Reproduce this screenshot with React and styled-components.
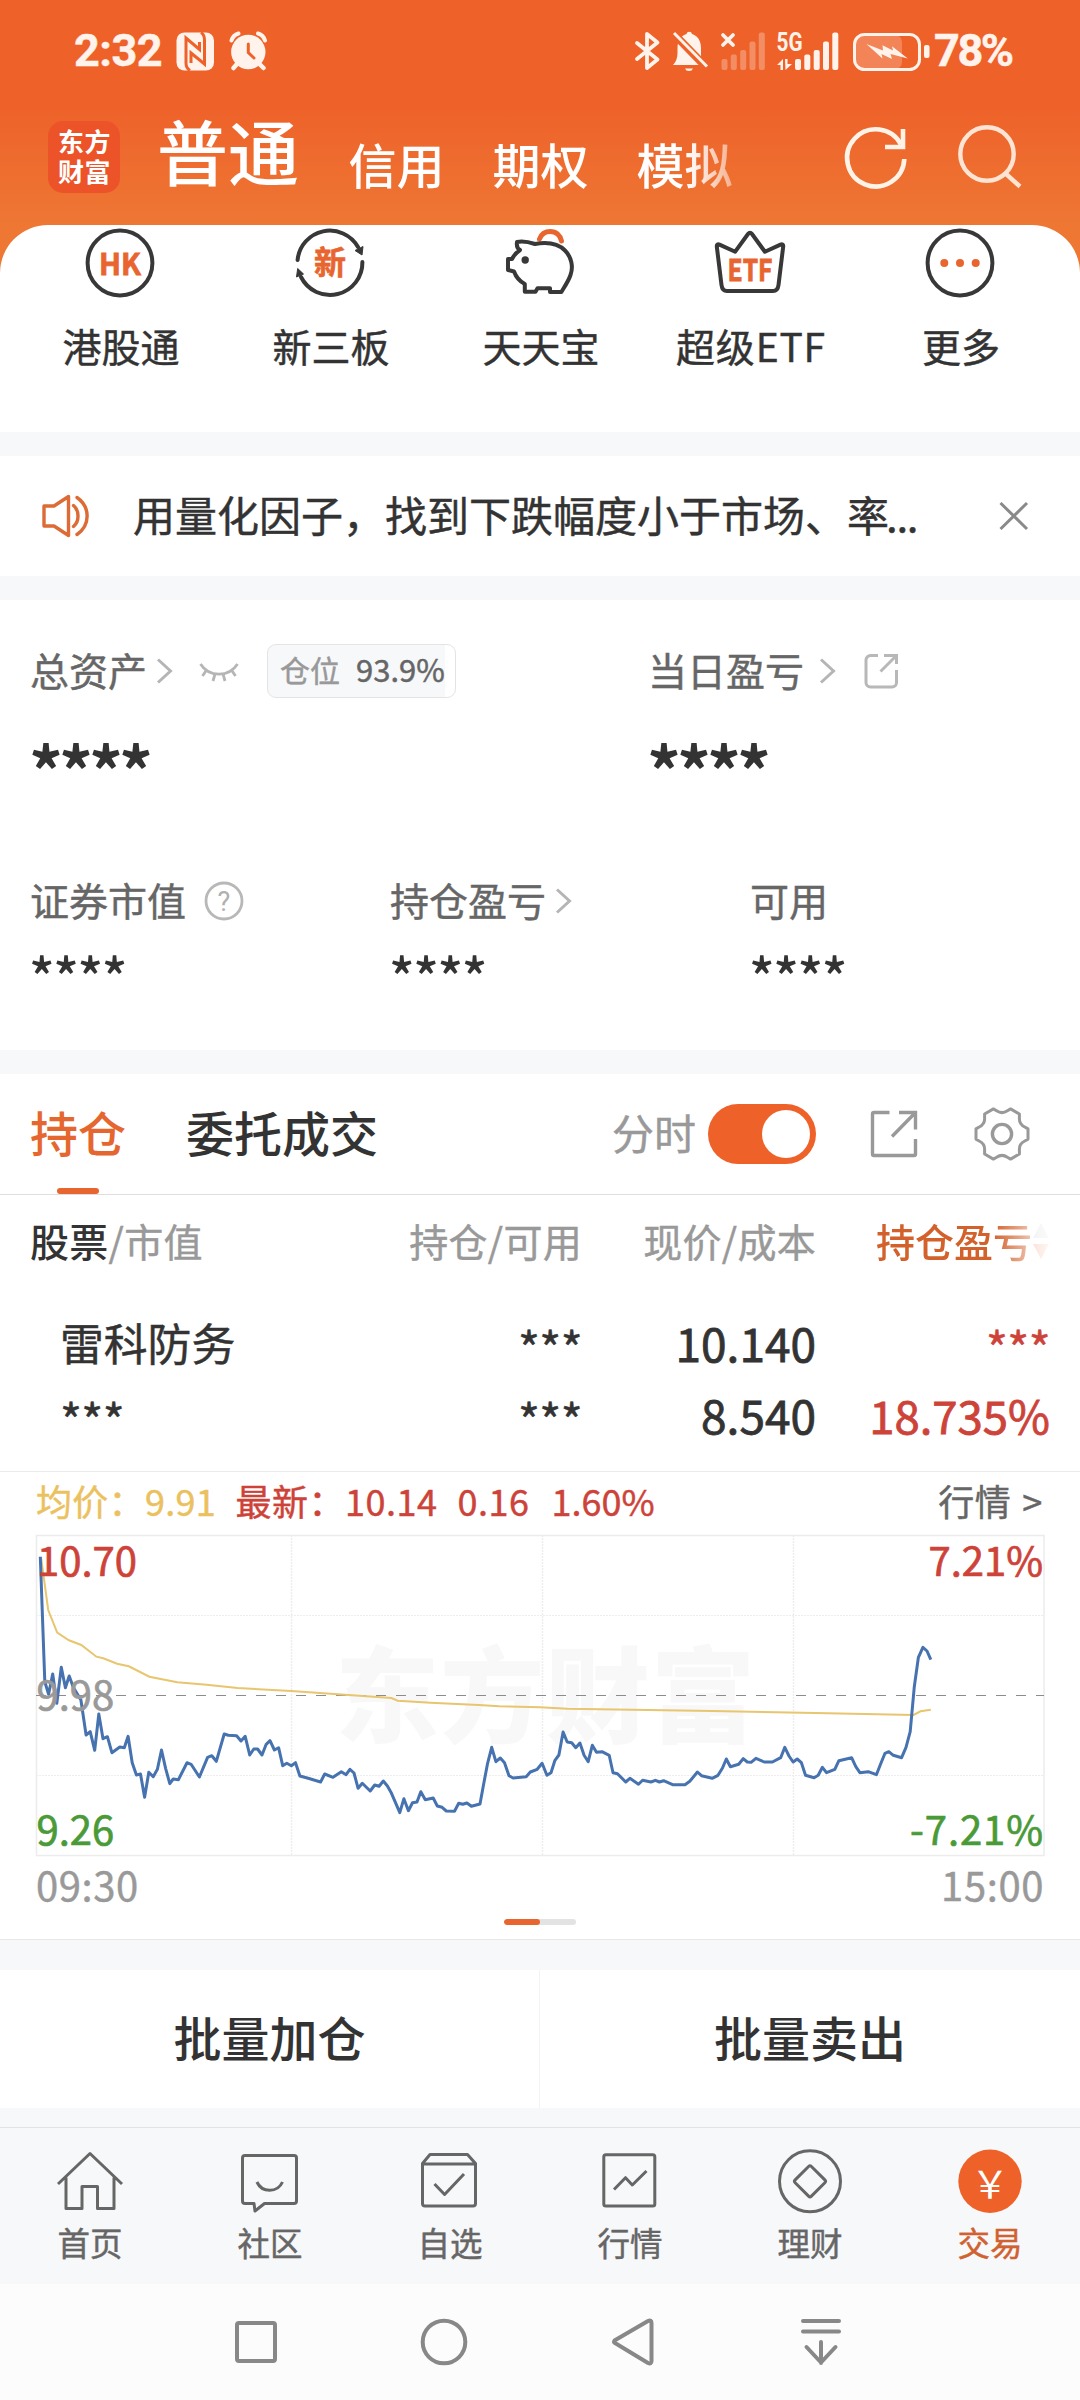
import styled, { createGlobalStyle } from "styled-components";

const GlobalStyle = createGlobalStyle`
    * {
        box-sizing: border-box;
    }

    body {
        margin: 0;
        background-color: #fff;
        font-family: "Noto Sans CJK SC", sans-serif;
        color: #333;
        -webkit-text-stroke: 0.45px;
    }

    svg {
        display: block;
        flex: none;
        overflow: visible;
    }
`;

const Page = styled.div`
    width: 1080px;
    height: 2400px;
    display: flex;
    flex-direction: column;
    overflow: hidden;
`;

const Hero = styled.header`
    height: 432px;
    flex: none;
    background: linear-gradient(to bottom, #ee622a 0, #ee622a 108px, #ee7734 225px);
`;

const StatusBar = styled.div`
    height: 102px;
    padding: 0 68.5px 0 74px;
    display: flex;
    align-items: center;
    justify-content: space-between;
    color: #fff3ec;
`;

const StatusGroup = styled.div`
    display: flex;
    align-items: center;
    gap: ${(props) => props.$gap}px;
`;

const StatusText = styled.span`
    margin-left: ${(props) => props.$pull || 0}px;
    font-family: Roboto, sans-serif;
    font-weight: 700;
    font-size: 45px;
    line-height: 50px;
    letter-spacing: ${(props) => props.$tracking}px;
`;

const TitleBar = styled.div`
    height: 123px;
    padding: 0 58px 0 48px;
    display: flex;
    align-items: flex-start;
`;

const Logo = styled.div`
    width: 72px;
    height: 72px;
    margin-top: 19px;
    padding: 5px 0 0 10px;
    border-radius: 15px;
    background-color: #ed5329;
    color: #fff;
    font-weight: 700;
    font-size: 26px;
    line-height: 30px;
    -webkit-text-stroke: 0;
`;

const LogoLine = styled.div`
    height: 30px;
    letter-spacing: 0.5px;
`;

const AccountTabs = styled.nav`
    width: 620px;
    height: 100px;
    margin-left: 37px;
    display: flex;
    align-items: baseline;
    gap: 48px;
    color: #fff;
    white-space: nowrap;
    mask-image: linear-gradient(to right, #000 530px, transparent 615px);
    -webkit-text-stroke: 0;
`;

const AccountTab = styled.span`
    font-size: ${(props) => (props.$active ? 71 : 48)}px;
    font-weight: 500;
    line-height: ${(props) => (props.$active ? 94 : 100)}px;
    padding-bottom: ${(props) => (props.$active ? 6 : 0)}px;
    margin-right: ${(props) => (props.$active ? 1.5 : 0)}px;
    transform: translateY(${(props) => (props.$active ? 0 : 4)}px);
`;

const TitleActions = styled.div`
    display: flex;
    margin: 20px 0 0 auto;
    gap: 40px;
`;

const Shortcuts = styled.div`
    height: 207px;
    padding: 3px 15px 0;
    display: grid;
    grid-template-columns: repeat(5, 210px);
    background-color: #fff;
    border-radius: 48px 48px 0 0;
`;

const Shortcut = styled.div`
    display: flex;
    flex-direction: column;
    align-items: center;
`;

const ShortcutLabel = styled.span`
    margin: 18px 0 0 2px;
    font-size: 39px;
    line-height: 58px;
    letter-spacing: ${(props) => props.$tracking || 0}px;
`;

const Band = styled.div`
    height: ${(props) => props.$height}px;
    flex: none;
    background-color: #f7f8fa;
`;

const Notice = styled.section`
    height: 120px;
    flex: none;
    padding: 0 51px 0 40px;
    display: flex;
    align-items: center;
`;

const NoticeText = styled.p`
    flex: 1;
    margin: -4px 0 0 41px;
    font-size: 42px;
    line-height: 60px;
    white-space: nowrap;
`;

const Ellipsis = styled.span`
    margin-left: -3px;
    letter-spacing: -1.3px;
`;

const Assets = styled.section`
    height: 450px;
    flex: none;
    padding: 41px 30px 0;
`;

const TotalRow = styled.div`
    height: 230px;
    display: grid;
    grid-template-columns: 618px 1fr;
`;

const DetailRow = styled.div`
    display: grid;
    grid-template-columns: repeat(3, 360px);
`;

const AssetHead = styled.div`
    height: 60px;
    display: flex;
    align-items: center;
    color: #666;
`;

const AssetName = styled.span`
    font-size: 39px;
    line-height: 56px;
    margin-top: -4px;
    margin-right: ${(props) => props.$gap || 0}px;
`;

const Masked = styled.div`
    font-size: ${(props) => (props.$large ? 67 : 53)}px;
    font-weight: ${(props) => (props.$large ? 700 : 500)};
    line-height: 60px;
    letter-spacing: ${(props) => (props.$large ? -4 : -1.4)}px;
    margin-top: ${(props) => (props.$large ? 37 : 14)}px;
    margin-left: -1px;
    -webkit-text-stroke: 0;
`;

const PositionTag = styled.div`
    width: 189px;
    height: 54px;
    margin-left: 27px;
    padding: 0 0 4px 12px;
    display: flex;
    align-items: center;
    gap: 16px;
    border: 1px solid #e3e4e6;
    border-radius: 9px;
    background: linear-gradient(to right, #f7f8fa 177px, #fff 177px);
    color: #999;
    font-size: 30px;
    line-height: 40px;
`;

const PositionValue = styled.span`
    color: #666;
    font-size: 31px;
`;

const HoldingTabs = styled.section`
    height: 121px;
    flex: none;
    padding: 0 49px 0 30px;
    display: flex;
    align-items: center;
    border-bottom: 1px solid #dedede;
`;

const HoldingTab = styled.div`
    height: 120px;
    margin-right: 60px;
    display: flex;
    flex-direction: column;
    align-items: center;
    font-size: 48px;
    font-weight: 500;
    line-height: 114px;
    color: ${(props) => (props.$active ? "#e5672f" : "#333")};
    -webkit-text-stroke: 0;

    &::after {
        content: "";
        width: 42px;
        height: 6px;
        border-radius: 3px;
        background-color: ${(props) => (props.$active ? "#e8652f" : "transparent")};
    }
`;

const SwitchLabel = styled.span`
    margin: -5px 12px 0 auto;
    font-size: 42px;
    line-height: 60px;
    color: #999;
`;

const Switch = styled.div`
    width: 108px;
    height: 60px;
    padding: 6px;
    display: flex;
    justify-content: flex-end;
    border-radius: 30px;
    background-color: #ee622a;
    margin-right: 53px;

    &::after {
        content: "";
        width: 48px;
        height: 48px;
        border-radius: 50%;
        background-color: #fff;
    }
`;

const GearSlot = styled.div`
    margin-left: 54px;
`;

const Columns = styled.div`
    padding: 0 30px;
    display: grid;
    grid-template-columns: 282px 270px 234px 234px;
`;

const HeadRow = styled(Columns)`
    height: 95px;
    font-size: 39px;
    line-height: 91px;
    letter-spacing: 0.3px;
    color: #999;
`;

const HeadCell = styled.span`
    text-align: ${(props) => (props.$first ? "left" : "right")};
    white-space: nowrap;
`;

const HeadStrong = styled.b`
    font-weight: 500;
    color: #333;
    -webkit-text-stroke: 0;
`;

const SortCell = styled.span`
    height: 91px;
    display: flex;
    align-items: center;
    justify-content: flex-end;
    color: #d3612c;
    font-weight: 500;
    letter-spacing: 0;
    -webkit-text-stroke: 0;
    mask-image: linear-gradient(to right, #000 177px, transparent 239px);
`;

const HoldingRow = styled(Columns)`
    height: 182px;
    padding-top: 17px;
    grid-auto-rows: 72px;
    border-bottom: 1px solid #ebebeb;
`;

const Cell = styled.span`
    text-align: right;
    font-size: ${(props) => (props.$up ? 45.5 : 46)}px;
    line-height: 71px;
    color: ${(props) => (props.$up ? "#cd4339" : "#333")};
    -webkit-text-stroke: 0.8px;
`;

const StarCell = styled(Cell)`
    padding-left: ${(props) => (props.$first ? 30 : 0)}px;
    text-align: ${(props) => (props.$first ? "left" : "right")};
    font-size: 47px;
    line-height: 79px;
    letter-spacing: -0.6px;
    -webkit-text-stroke: 0.5px;
`;

const StockName = styled(Cell)`
    padding-left: 30px;
    text-align: left;
    font-size: 43.8px;
    -webkit-text-stroke: 0.5px;
`;

const ChartPanel = styled.section`
    height: 468px;
    flex: none;
    padding: 0 36px;
    border-bottom: 1px solid #e8e8e8;
`;

const ChartHead = styled.div`
    height: 63px;
    display: flex;
    font-size: 36px;
    line-height: 56px;
    white-space: pre;
`;

const Figure = styled.span`
    margin-right: ${(props) => props.$gap || 0}px;
    letter-spacing: ${(props) => props.$tracking || 0}px;
    color: ${(props) => props.$color};
`;

const QuoteLink = styled.span`
    margin: 0 1px 0 auto;
    color: #666;
    letter-spacing: 0.7px;
    word-spacing: 2px;
`;

const ChartTimes = styled.div`
    height: 64px;
    display: flex;
    justify-content: space-between;
    color: #999;
    font-size: 40px;
    line-height: 57px;
    letter-spacing: 0.6px;
`;

const Pager = styled.div`
    width: 72px;
    height: 6px;
    margin: -1px auto 0;
    display: flex;
    border-radius: 3px;
    overflow: hidden;
    background-color: #e3e3e3;

    &::before {
        content: "";
        width: 36px;
        border-radius: 3px;
        background-color: #e8652f;
    }
`;

const BatchBar = styled.div`
    height: 138px;
    flex: none;
    display: grid;
    grid-template-columns: 539px 541px;
`;

const BatchButton = styled.button`
    border: none;
    border-left: ${(props) => (props.$divided ? "1px solid #f3f3f5" : "none")};
    padding: 0 0 7px;
    background-color: #fff;
    color: #333;
    font-family: inherit;
    font-size: 48px;
    font-weight: 500;
    -webkit-text-stroke: 0;
`;

const TabBar = styled.nav`
    height: 157px;
    flex: none;
    display: grid;
    grid-template-columns: repeat(6, 180px);
    border-top: 1px solid #e1e3e5;
    background-color: #f7f8fa;
`;

const TabItem = styled.div`
    padding-top: 17px;
    display: flex;
    flex-direction: column;
    align-items: center;
    font-size: 32.5px;
    line-height: 48px;
    color: ${(props) => (props.$active ? "#cf6230" : "#666")};
`;

const TabLabel = styled.span`
    margin-top: 1px;
`;

const SystemBar = styled.div`
    height: 116px;
    flex: none;
    padding: 0 163px 0 161.5px;
    display: grid;
    grid-template-columns: repeat(4, 188.5px);
    align-items: center;
    justify-items: center;
    background-color: #fcfcfc;
`;

const ORANGE = "#ee622a";
const RED = "#cd4339";
const INK = "#383838";

function NfcIcon() {
    return (
        <svg width="39" height="39" viewBox="0 0 39 39" fill="none">
            <rect x="0.5" y="0.5" width="37.5" height="38" rx="8" fill="#fff3ec" />
            <path d="M14 38.5C10.5 36.5 10 34 10 31V6L23.5 17.5V10" stroke={ORANGE} strokeWidth="3" />
            <path d="M25 0.5C28 2.5 28.5 5 28.5 8V32L15 21V31" stroke={ORANGE} strokeWidth="3" />
        </svg>
    );
}

function AlarmIcon() {
    return (
        <svg width="39" height="40" viewBox="0 0 39 40" fill="none" stroke="#fff3ec" strokeLinecap="round">
            <circle cx="19.3" cy="21" r="17.2" fill="#fff3ec" stroke="none" />
            <path d="M2.5 9.5C3.5 6 6 3.5 9.5 2.5M36 9.5C35 6 32.5 3.5 29 2.5" strokeWidth="4" />
            <path d="M8 33L4.5 37M30.5 33L34.5 37" strokeWidth="4.5" />
            <path d="M19.3 13V21.5L25 27" stroke={ORANGE} strokeWidth="3" />
        </svg>
    );
}

function BluetoothIcon() {
    return (
        <svg width="25" height="38" viewBox="0 0 25 38" fill="none" stroke="#fff3ec" strokeWidth="3.8" strokeLinejoin="round" strokeLinecap="round">
            <path d="M2 11L22.5 27.5L12 36V2L22.5 10.5L2 27" />
        </svg>
    );
}

function MutedBellIcon() {
    return (
        <svg width="36" height="41" viewBox="0 0 36 41">
            <path d="M1 34C4 31 5.5 27 5.5 22V17C5.5 9 9.5 4.5 14.5 3A2.8 2.8 0 0 1 20 3C25 4.5 29 9 29 17V24C29 28 30 31 33 34Z" fill="#fff3ec" />
            <path d="M13 37.5H21A4.2 3.6 0 0 1 13 37.5Z" fill="#fff3ec" />
            <path d="M0 1L36 38" stroke={ORANGE} strokeWidth="8" />
            <path d="M2 2L35 35.5" stroke="#fff3ec" strokeWidth="3" />
        </svg>
    );
}

const bars = [
    { x: 0, height: 11 },
    { x: 9.3, height: 15.5 },
    { x: 18.7, height: 20 },
    { x: 28, height: 28.5 },
    { x: 37.3, height: 37.5 },
];

function SignalBars({ left, opacity }) {
    return bars.map((bar) => (
        <rect key={bar.x} x={left + bar.x} y={38 - bar.height} width="6" height={bar.height} rx="2" fill="#fff3ec" opacity={opacity} />
    ));
}

function NoSignalIcon() {
    return (
        <svg width="44" height="39" viewBox="0 0 44 39">
            <SignalBars left={1.5} opacity={0.3} />
            <path d="M3 3L13 13M13 3L3 13" stroke="#fff3ec" strokeWidth="3.8" strokeLinecap="round" />
        </svg>
    );
}

function SignalIcon() {
    return (
        <svg width="64" height="39" viewBox="0 0 64 39" fill="#fff3ec">
            <text x="0.5" y="19" fontFamily="Roboto" fontSize="25" fontWeight="700" textLength="26" lengthAdjust="spacingAndGlyphs">5G</text>
            <path d="M1 33L7 27V38H4.5V33ZM9 27H11.5V32H16L9.5 38Z" />
            <SignalBars left={19} opacity={1} />
        </svg>
    );
}

function BatteryIcon() {
    return (
        <svg width="78" height="40" viewBox="0 0 78 40">
            <rect x="4" y="4" width="46" height="34" rx="7" fill="#fff3ec" opacity="0.24" />
            <rect x="2.5" y="3.5" width="65" height="35" rx="10" fill="none" stroke="#fff3ec" strokeWidth="3" />
            <rect x="72" y="14" width="5.5" height="13" rx="2" fill="#fff3ec" />
            <path d="M14.4 13L31 19.5L30.5 14.3L41 19.5L40 15.3L55.8 27.5L38.5 23L40 28L29.5 23L30.5 27.5Z" fill="#fff3ec" />
        </svg>
    );
}

function RefreshIcon() {
    return (
        <svg width="70" height="72" viewBox="0 0 70 72" fill="none" stroke="#fff3e8" strokeWidth="4.6">
            <path d="M64.3 37A28.6 28.6 0 1 1 61 22.5" />
            <path d="M63 7V25H45" />
        </svg>
    );
}

function SearchIcon() {
    return (
        <svg width="72" height="72" viewBox="0 0 72 72" fill="none" stroke="#ffe4d3" strokeWidth="4.4">
            <circle cx="37" cy="32" r="26.7" />
            <path d="M55.5 51.5L70 64.5" />
        </svg>
    );
}

function HkIcon() {
    return (
        <svg width="70" height="70" viewBox="0 0 70 70">
            <circle cx="35" cy="35" r="32.4" fill="none" stroke={INK} strokeWidth="4" />
            <text x="35" y="46.5" textAnchor="middle" fontSize="30" fontWeight="700" fill="#e8652f" stroke="#e8652f" strokeWidth="0.8" textLength="42" lengthAdjust="spacingAndGlyphs">HK</text>
        </svg>
    );
}

function NewBoardIcon() {
    return (
        <svg width="70" height="70" viewBox="0 0 70 70">
            <g fill="none" stroke={INK} strokeWidth="4" strokeLinecap="round">
                <path d="M2.6 32A32.4 32.4 0 0 1 63 19" />
                <path d="M67.4 34A32.4 32.4 0 0 1 6 49" />
            </g>
            <path d="M60 22.5L68 18.5L67 27ZM8.5 46L1.5 49L2.7 40.5Z" fill={INK} stroke={INK} strokeLinejoin="round" />
            <text x="35" y="46" textAnchor="middle" fontSize="32" fontWeight="700" fill="#e8652f" stroke="#e8652f" strokeWidth="0.6">新</text>
        </svg>
    );
}

function PiggyIcon() {
    return (
        <svg width="70" height="70" viewBox="0 0 70 70" fill="none" strokeLinejoin="round" strokeLinecap="round">
            <path d="M34.5 11C36.5 5.5 40.5 3.5 45.3 3.5C51 3.5 55.5 7.5 56.5 13" stroke="#e8652f" strokeWidth="5" />
            <path d="M12 14C18 12.5 24 14 30 16C44 13.5 54 16.5 60 22.5C66.5 29 68.5 39 65.5 47C63.5 53 60 58 56.4 64H45V60.3H32.5L30.5 63.7H19.8V56C14 53 11 49 9 43.5L3 42V31H7C9 27 11.5 24.5 15 22C12.5 20.5 11.5 17 12 14Z" stroke={INK} strokeWidth="4" />
            <circle cx="20.2" cy="32" r="3.7" fill={INK} />
        </svg>
    );
}

function EtfIcon() {
    return (
        <svg width="70" height="70" viewBox="0 0 70 70">
            <path d="M1.8 18.5C1.6 16.5 3 16 4.5 16.6L20.2 23.7L33 6C34.3 4.3 35.7 4.3 37 6L49.9 23.7L65.5 16.6C67 16 68.5 16.5 68.2 18.5L63.5 57C63 61 61.5 63 58 63H12C8.5 63 7 61 6.5 57Z" fill="none" stroke={INK} strokeWidth="4" strokeLinejoin="round" />
            <text x="35" y="52.5" textAnchor="middle" fontSize="30" fontWeight="700" fill="#e8652f" stroke="#e8652f" strokeWidth="0.8" textLength="45" lengthAdjust="spacingAndGlyphs">ETF</text>
        </svg>
    );
}

function MoreIcon() {
    return (
        <svg width="70" height="70" viewBox="0 0 70 70" fill="#e8652f">
            <circle cx="35" cy="35" r="32.4" fill="none" stroke={INK} strokeWidth="4" />
            <circle cx="19.3" cy="35" r="4" />
            <circle cx="35" cy="35" r="4" />
            <circle cx="50.7" cy="35" r="4" />
        </svg>
    );
}

function SpeakerIcon() {
    return (
        <svg width="52" height="46" viewBox="0 0 52 46" fill="none" stroke="#dc6b36" strokeWidth="3.4" strokeLinejoin="round">
            <path d="M4 13H14L28.5 3.5V42.5L14 33H4Z" />
            <path d="M33.5 12.5C39.5 17.5 39.5 28.5 33.5 33.5M37 4.5C50.5 14 50.5 32 37 41.5" strokeLinecap="round" />
        </svg>
    );
}

function CloseIcon() {
    return (
        <svg width="30" height="30" viewBox="0 0 30 30" stroke="#8a8a8a" strokeWidth="3">
            <path d="M1.5 2L28 28M28 2L1.5 28" />
        </svg>
    );
}

function Chevron() {
    return (
        <svg width="17" height="28" viewBox="0 0 17 28" fill="none" stroke="#b5b5b5" strokeWidth="3">
            <path d="M2 2.5L14.5 14L2 25.5" />
        </svg>
    );
}

const EyeSlot = styled.div`
    margin-left: 25px;
`;

function ClosedEyeIcon() {
    return (
        <svg width="42" height="26" viewBox="0 0 42 26" fill="none" stroke="#b5b5b5" strokeWidth="2.8">
            <path d="M2.5 6C11 19.5 31 19.5 39.5 6M8.5 12L4.5 18M17 16L15 23M25 16L27 23M33.5 12L37.5 18" />
        </svg>
    );
}

const SmallShareSlot = styled.div`
    margin-left: 27px;
`;

function SmallShareIcon() {
    return (
        <svg width="37" height="38" viewBox="0 0 37 38" fill="none" stroke="#b8b8b8" strokeWidth="3">
            <path d="M15 3.5H7.5A4.5 4.5 0 0 0 3 8V30.5A4.5 4.5 0 0 0 7.5 35H29A4.5 4.5 0 0 0 33.5 30.5V18" />
            <path d="M21 3.5H33.5V12M33.5 3.5L17.5 19.5" />
        </svg>
    );
}

function ShareIcon() {
    return (
        <svg width="50" height="50" viewBox="0 0 50 50" fill="none" stroke="#999" strokeWidth="3.4">
            <path d="M20.5 3.5H5A1.5 1.5 0 0 0 3.5 5V45A1.5 1.5 0 0 0 5 46.5H45A1.5 1.5 0 0 0 46.5 45V30" />
            <path d="M30 3.5H46.5V20.5M46.5 3.5L23 27.5" />
        </svg>
    );
}

function HelpIcon() {
    return (
        <svg width="40" height="40" viewBox="0 0 40 40">
            <circle cx="20" cy="20" r="18" fill="none" stroke="#b8b8b8" strokeWidth="2.8" />
            <text x="20" y="29.5" textAnchor="middle" fontFamily="Roboto" fontSize="27" fill="#b0b0b0">?</text>
        </svg>
    );
}

// six flat teeth joined by inward curves
function gearPath(cx, cy) {
    const at = (radius, deg) => {
        const rad = (deg * Math.PI) / 180;
        return `${(cx + radius * Math.cos(rad)).toFixed(1)} ${(cy + radius * Math.sin(rad)).toFixed(1)}`;
    };
    let d = `M${at(26.5, -11)}`;
    for (let k = 0; k < 6; k++) {
        const deg = k * 60;
        d += `L${at(26.5, deg + 11)}L${at(23.8, deg + 17)}Q${at(19.5, deg + 30)} ${at(23.8, deg + 43)}L${at(26.5, deg + 49)}`;
    }
    return d + "Z";
}

function GearIcon() {
    return (
        <svg width="58" height="58" viewBox="0 0 58 58" fill="none" stroke="#999" strokeWidth="3" strokeLinejoin="round">
            <path d={gearPath(29, 29)} />
            <circle cx="29" cy="29" r="9.6" strokeWidth="3.4" />
        </svg>
    );
}

function SortIcon() {
    return (
        <svg width="18" height="36" viewBox="0 0 18 36" opacity="0.5">
            <path d="M9 0L17 15H1Z" fill="#bbb" />
            <path d="M9 36L17 21H1Z" fill="#e8652f" />
        </svg>
    );
}

const pricePoints = "4.3,21.7 8.8,146.7 12.6,159.3 16.7,139 20.8,168.3 25.3,132.3 29.4,152.7 33.2,141 37.3,152.3 41.5,159.3 44.9,165 50.1,200 54.2,196.7 58.7,215.3 62.8,179 67,203.7 71.4,201.7 75.9,217.7 83.8,212 88.3,212.7 92.1,201.3 96.2,227.7 100.4,240 104.5,239 108.6,262.3 112.8,237.3 117.2,241.7 121.4,234.3 125.5,215 129.6,233.3 133.8,248.7 137.2,244 142.4,244.7 151,227.7 155.1,229.3 163.4,242 171.6,222.3 175.8,220.7 180.3,226.3 188.2,199 192.3,200.3 200.6,200.7 205,206 209.2,201.3 213.7,220 217.8,214 221.6,214 226,220 230.2,209.3 234,205.7 238.4,215 242.6,212.7 246.7,230.7 250.8,228.3 255.3,230.7 259.5,227.7 263.9,241 272.2,243.3 284.6,247 288.7,239 297,242.3 305.3,236.7 310.1,239.7 313.9,234.3 318,238 322.1,253.3 326.3,248.3 334.2,256 338.7,250 343.1,251.3 347.3,246 351.4,251 355.5,258.3 363.8,277.7 367.9,263.7 372.4,275.7 376.5,267.7 381,267 384.8,256.7 389.3,264.7 397.2,263 401.3,271 406.1,272.3 410.3,276 418.5,276.3 422.7,268.3 426.8,269.3 430.9,268 435.4,271.3 444,269 447.8,248.3 451.6,228.3 455.7,212.3 459.9,226.7 464.3,223 468.5,227.7 473,240.7 477.1,243 490.2,241.7 494.3,237 501.2,234.3 506.1,228.3 510.9,240.3 515,237.7 518.8,225.7 522.9,220 527.1,197 531.2,207 535.7,207.7 539.8,212.7 543.9,208 548.1,220.3 552.2,226.7 556.3,210.3 560.5,217.3 566,216.7 573.2,220.3 577,237.7 581.5,238.7 589.7,247 593.9,243.3 602.5,249.3 606.6,245.3 614.9,247 619.4,245.3 623.5,247 627.6,245.7 636.6,249.7 649,249.7 653.8,246.3 661.4,237 665.5,240.7 676.2,243.3 682,240.3 686.5,233 690.3,224 694.4,231.7 702.7,229.3 707.2,223.7 711.3,227 715.1,227.3 719.9,223.3 728.2,227 736.4,227 744.7,222.7 748.8,212.3 753,221 757.1,227 761.2,224 765.4,227.7 769.5,240.3 778.1,242.7 782.2,240.3 786.4,232.3 790.5,237.7 798.8,234.3 802.9,225.7 815.6,222.7 819.8,231.7 823.9,237.7 832.2,236.7 840.4,239.7 844.9,228.3 849,218.3 852.8,216.7 857.3,220.3 865.6,222.7 870,212.3 874.2,196.7 878.3,151.7 882.4,122.3 886.9,112.3 891,116 894.8,124.7";

const averagePoints = "5,22 12.2,75 21.2,97.7 32.9,105.3 45.3,110 60.4,121.7 67.3,123.3 81.1,128.7 92.8,131.3 113.4,141.7 141.3,147.3 170.6,149.7 201.6,153 255.3,156 355.5,163 361.7,165.7 394.4,167.7 442.7,170 463.3,171.3 504,172.3 531.5,173.7 676.2,176 779.5,178 877.6,180 884.5,176.3 894.8,174.7";

function MinuteChart() {
    return (
        <svg width="1010" height="321" viewBox="0 0 1010 321" fill="none">
            <text x="299" y="200" fontSize="104" fontWeight="900" fill="#f8f8f8" textLength="420">东方财富</text>
            <g stroke="#ededed" strokeDasharray="2 1">
                <path d="M255.5 0V320M506.5 0V320M757.5 0V320" strokeWidth="1.5" />
                <path d="M0 80.5H1008M0 240.5H1008" />
            </g>
            <rect x="0.5" y="0.5" width="1007.5" height="320" stroke="#ececec" strokeWidth="1.5" />
            <path d="M0 160.5H1008" stroke="#8c8c8c" strokeWidth="1.2" strokeDasharray="10 10" />
            <polyline points={averagePoints} stroke="#e8c56f" strokeWidth="2" />
            <polyline points={pricePoints} stroke="#4672b0" strokeWidth="3" strokeLinejoin="round" />
            <g fontSize="40" strokeWidth="0.7">
                <text x="1" y="41" fill={RED} stroke={RED}>10.70</text>
                <text x="0.5" y="174.5" fill="#999" stroke="#999">9.98</text>
                <text x="0.5" y="309.5" fill="#4a9a38" stroke="#4a9a38">9.26</text>
                <text x="1007" y="41" fill={RED} stroke={RED} textAnchor="end">7.21%</text>
                <text x="1007" y="309.5" fill="#4a9a38" stroke="#4a9a38" textAnchor="end" textLength="133">-7.21%</text>
            </g>
        </svg>
    );
}

function TabGlyph({ children }) {
    return (
        <svg width="72" height="72" viewBox="0 0 72 72" fill="none" stroke="#666" strokeWidth="3" strokeLinejoin="round">
            {children}
        </svg>
    );
}

const shortcuts = [
    { label: "港股通", icon: <HkIcon /> },
    { label: "新三板", icon: <NewBoardIcon /> },
    { label: "天天宝", icon: <PiggyIcon /> },
    { label: "超级ETF", icon: <EtfIcon />, tracking: 0.8 },
    { label: "更多", icon: <MoreIcon /> },
];

const tabs = [
    {
        label: "首页",
        icon: <path d="M4 39L36 8.5L68 39M12 32.5V63.5H28V41.5H43.5V63.5H60V32.5" />,
    },
    {
        label: "社区",
        icon: (
            <>
                <path d="M11 10.5H60A2.5 2.5 0 0 1 62.5 13V56A2.5 2.5 0 0 1 60 58.5H30.5L21 66L20 58.5H11A2.5 2.5 0 0 1 8.5 56V13A2.5 2.5 0 0 1 11 10.5Z" />
                <path d="M22.9 37C28 48 43.5 48 48.5 37" />
            </>
        ),
    },
    {
        label: "自选",
        icon: (
            <>
                <path d="M8.5 18.5L16 9.5H53.5L61.5 18.5V58.5A2.5 2.5 0 0 1 59 61H11A2.5 2.5 0 0 1 8.5 58.5ZM8.5 19H61.5" />
                <path d="M20.5 39L30.6 49.5L50 29" />
            </>
        ),
    },
    {
        label: "行情",
        icon: (
            <>
                <rect x="9.8" y="9.8" width="51" height="51.2" rx="2" />
                <path d="M20 44.5L31.5 32.7L38.3 40L52.5 26" />
            </>
        ),
    },
    {
        label: "理财",
        icon: (
            <>
                <circle cx="36" cy="36.3" r="30.5" />
                <rect x="24.5" y="24.8" width="23" height="23" rx="2" transform="rotate(45 36 36.3)" />
            </>
        ),
    },
    {
        label: "交易",
        active: true,
        icon: (
            <>
                <circle cx="36" cy="36.3" r="31.7" fill={ORANGE} stroke="none" />
                <text x="36" y="52.5" textAnchor="middle" fontSize="38" fill="#fff" stroke="none">￥</text>
            </>
        ),
    },
];

const App = () => {
    return (
        <Page>
            <GlobalStyle />
            <Hero>
                <StatusBar>
                    <StatusGroup $gap={14}>
                        <StatusText $tracking={-0.5}>2:32</StatusText>
                        <NfcIcon />
                        <AlarmIcon />
                    </StatusGroup>
                    <StatusGroup $gap={12}>
                        <BluetoothIcon />
                        <MutedBellIcon />
                        <NoSignalIcon />
                        <SignalIcon />
                        <BatteryIcon />
                        <StatusText $tracking={-2.5} $pull={-8}>78%</StatusText>
                    </StatusGroup>
                </StatusBar>
                <TitleBar>
                    <Logo>
                        <LogoLine>东方</LogoLine>
                        <LogoLine>财富</LogoLine>
                    </Logo>
                    <AccountTabs>
                        <AccountTab $active>普通</AccountTab>
                        <AccountTab>信用</AccountTab>
                        <AccountTab>期权</AccountTab>
                        <AccountTab>模拟</AccountTab>
                    </AccountTabs>
                    <TitleActions>
                        <RefreshIcon />
                        <SearchIcon />
                    </TitleActions>
                </TitleBar>
                <Shortcuts>
                    {shortcuts.map((item) => (
                        <Shortcut key={item.label}>
                            {item.icon}
                            <ShortcutLabel $tracking={item.tracking}>{item.label}</ShortcutLabel>
                        </Shortcut>
                    ))}
                </Shortcuts>
            </Hero>
            <Band $height={24} />
            <Notice>
                <SpeakerIcon />
                <NoticeText>用量化因子，找到下跌幅度小于市场、率<Ellipsis>...</Ellipsis></NoticeText>
                <CloseIcon />
            </Notice>
            <Band $height={24} />
            <Assets>
                <TotalRow>
                    <div>
                        <AssetHead>
                            <AssetName $gap={9}>总资产</AssetName>
                            <Chevron />
                            <EyeSlot><ClosedEyeIcon /></EyeSlot>
                            <PositionTag>
                                仓位
                                <PositionValue>93.9%</PositionValue>
                            </PositionTag>
                        </AssetHead>
                        <Masked $large>****</Masked>
                    </div>
                    <div>
                        <AssetHead>
                            <AssetName $gap={15}>当日盈亏</AssetName>
                            <Chevron />
                            <SmallShareSlot><SmallShareIcon /></SmallShareSlot>
                        </AssetHead>
                        <Masked $large>****</Masked>
                    </div>
                </TotalRow>
                <DetailRow>
                    <div>
                        <AssetHead>
                            <AssetName $gap={18}>证券市值</AssetName>
                            <HelpIcon />
                        </AssetHead>
                        <Masked>****</Masked>
                    </div>
                    <div>
                        <AssetHead>
                            <AssetName $gap={9}>持仓盈亏</AssetName>
                            <Chevron />
                        </AssetHead>
                        <Masked>****</Masked>
                    </div>
                    <div>
                        <AssetHead>
                            <AssetName>可用</AssetName>
                        </AssetHead>
                        <Masked>****</Masked>
                    </div>
                </DetailRow>
            </Assets>
            <Band $height={24} />
            <HoldingTabs>
                <HoldingTab $active>持仓</HoldingTab>
                <HoldingTab>委托成交</HoldingTab>
                <SwitchLabel>分时</SwitchLabel>
                <Switch />
                <ShareIcon />
                <GearSlot><GearIcon /></GearSlot>
            </HoldingTabs>
            <HeadRow>
                <HeadCell $first><HeadStrong>股票</HeadStrong>/市值</HeadCell>
                <HeadCell>持仓/可用</HeadCell>
                <HeadCell>现价/成本</HeadCell>
                <SortCell>持仓盈亏<SortIcon /></SortCell>
            </HeadRow>
            <HoldingRow>
                <StockName>雷科防务</StockName>
                <StarCell>***</StarCell>
                <Cell>10.140</Cell>
                <StarCell $up>***</StarCell>
                <StarCell $first>***</StarCell>
                <StarCell>***</StarCell>
                <Cell>8.540</Cell>
                <Cell $up>18.735%</Cell>
            </HoldingRow>
            <ChartPanel>
                <ChartHead>
                    <Figure $color="#ebc160" $tracking={0.3} $gap={19.5}>均价：9.91</Figure>
                    <Figure $color={RED} $tracking={0.5} $gap={20}>最新：10.14</Figure>
                    <Figure $color={RED} $tracking={0.5} $gap={22}>0.16</Figure>
                    <Figure $color={RED}>1.60%</Figure>
                    <QuoteLink>行情 &gt;</QuoteLink>
                </ChartHead>
                <MinuteChart />
                <ChartTimes>
                    <span>09:30</span>
                    <span>15:00</span>
                </ChartTimes>
                <Pager />
            </ChartPanel>
            <Band $height={30} />
            <BatchBar>
                <BatchButton>批量加仓</BatchButton>
                <BatchButton $divided>批量卖出</BatchButton>
            </BatchBar>
            <Band $height={19} />
            <TabBar>
                {tabs.map((tab) => (
                    <TabItem key={tab.label} $active={tab.active}>
                        <TabGlyph>{tab.icon}</TabGlyph>
                        <TabLabel>{tab.label}</TabLabel>
                    </TabItem>
                ))}
            </TabBar>
            <SystemBar>
                <svg width="44" height="44" viewBox="0 0 44 44" fill="none" stroke="#888" strokeWidth="4">
                    <rect x="3" y="3" width="38" height="38" rx="2" />
                </svg>
                <svg width="48" height="48" viewBox="0 0 48 48" fill="none" stroke="#888" strokeWidth="4">
                    <circle cx="24" cy="24" r="21.3" />
                </svg>
                <svg width="44" height="50" viewBox="0 0 44 50" fill="none" stroke="#888" strokeWidth="4" strokeLinejoin="round">
                    <path d="M3.5 23.5Q2.5 25 4 26L37 46Q40.5 47.5 40.5 44V6Q40.5 2.5 37 4Z" />
                </svg>
                <svg width="44" height="50" viewBox="0 0 44 50" fill="none" stroke="#888" strokeWidth="4" strokeLinejoin="round" strokeLinecap="round">
                    <path d="M4 4H40M4 14.5H40M22 25V46M7.5 30L22 45.5L36.5 30" />
                </svg>
            </SystemBar>
        </Page>
    );
};

export default App;
